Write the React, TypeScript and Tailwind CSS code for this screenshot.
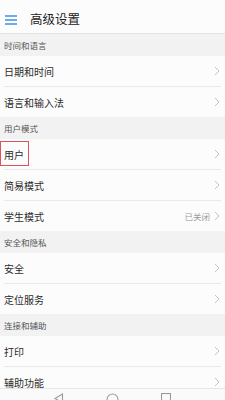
import React from 'react';

// ==========================================
// TYPES
// ==========================================

interface RowItem {
  title: string;
  value?: string;
  marked?: boolean;
}

interface Group {
  title: string;
  rows: RowItem[];
}

const groups: Group[] = [
  { title: '时间和语言', rows: [{ title: '日期和时间' }, { title: '语言和输入法' }] },
  {
    title: '用户模式',
    rows: [{ title: '用户', marked: true }, { title: '简易模式' }, { title: '学生模式', value: '已关闭' }],
  },
  { title: '安全和隐私', rows: [{ title: '安全' }, { title: '定位服务' }] },
  { title: '连接和辅助', rows: [{ title: '打印' }, { title: '辅助功能' }] },
];

function Chevron() {
  return (
    <svg width="6" height="10" viewBox="0 0 6 10" className="shrink-0">
      <path d="M1 1l4 4-4 4" fill="none" stroke="#c4c4c4" strokeWidth="1" />
    </svg>
  );
}

function Row({ item, last }: { item: RowItem; last: boolean }) {
  return (
    <div className="relative">
      <div className="h-[30px] flex items-center pl-[4px] pr-[5px]">
        <span className="text-[10px] text-[#2b2b2b] flex-1">{item.title}</span>
        {item.value && <span className="text-[8.5px] text-[#9a9a9a] mr-[4px]">{item.value}</span>}
        <Chevron />
      </div>
      {!last && <div className="mx-[4px] h-px bg-[#e9e9e9]" />}
      {/* 红框标记 */}
      {item.marked && (
        <div className="absolute left-0 top-[2px] w-[29px] h-[25px] border border-[#d9545a]" />
      )}
    </div>
  );
}

export default function App() {
  return (
    <div
      className="relative w-[225px] h-[400px] overflow-hidden bg-[#fcfcfc]"
      style={{ fontFamily: '"Noto Sans CJK SC", "Noto Sans", sans-serif' }}
    >
      {/* Header */}
      <div className="h-[34px] pt-[6px] flex items-center border-b border-[#e3e3e3]">
        <svg width="13" height="10" viewBox="0 0 13 10" className="ml-[5px]">
          <path d="M0 1h12M0 5h12M0 9h12" stroke="#3f8fe8" strokeWidth="1.3" />
        </svg>
        <span className="ml-[12px] text-[12.5px] text-[#222]">高级设置</span>
      </div>

      {groups.map((g) => (
        <div key={g.title}>
          <div className="h-[22px] flex items-center pl-[4px] bg-[#f2f2f2]">
            <span className="text-[8.5px] text-[#555]">{g.title}</span>
          </div>
          {g.rows.map((r, i) => (
            <Row key={r.title} item={r} last={i === g.rows.length - 1} />
          ))}
        </div>
      ))}

      {/* Nav bar */}
      <div className="absolute left-0 right-0 bottom-0 h-[12px] bg-[#fafafa] border-t border-[#e6e6e6]">
        <svg width="10" height="12" viewBox="0 0 10 12" className="absolute left-[54px] top-[4px]">
          <path d="M8.5 1L1 5.5l7.5 4.5z" fill="none" stroke="#9a9a9a" strokeWidth="1.1" />
        </svg>
        <svg width="13" height="13" viewBox="0 0 13 13" className="absolute left-[106px] top-[4px]">
          <circle cx="6.5" cy="6.5" r="5.5" fill="none" stroke="#9a9a9a" strokeWidth="1.1" />
        </svg>
        <svg width="10" height="10" viewBox="0 0 10 10" className="absolute left-[161px] top-[4px]">
          <rect x="0.5" y="0.5" width="9" height="9" fill="none" stroke="#9a9a9a" strokeWidth="1.1" />
        </svg>
      </div>
    </div>
  );
}
